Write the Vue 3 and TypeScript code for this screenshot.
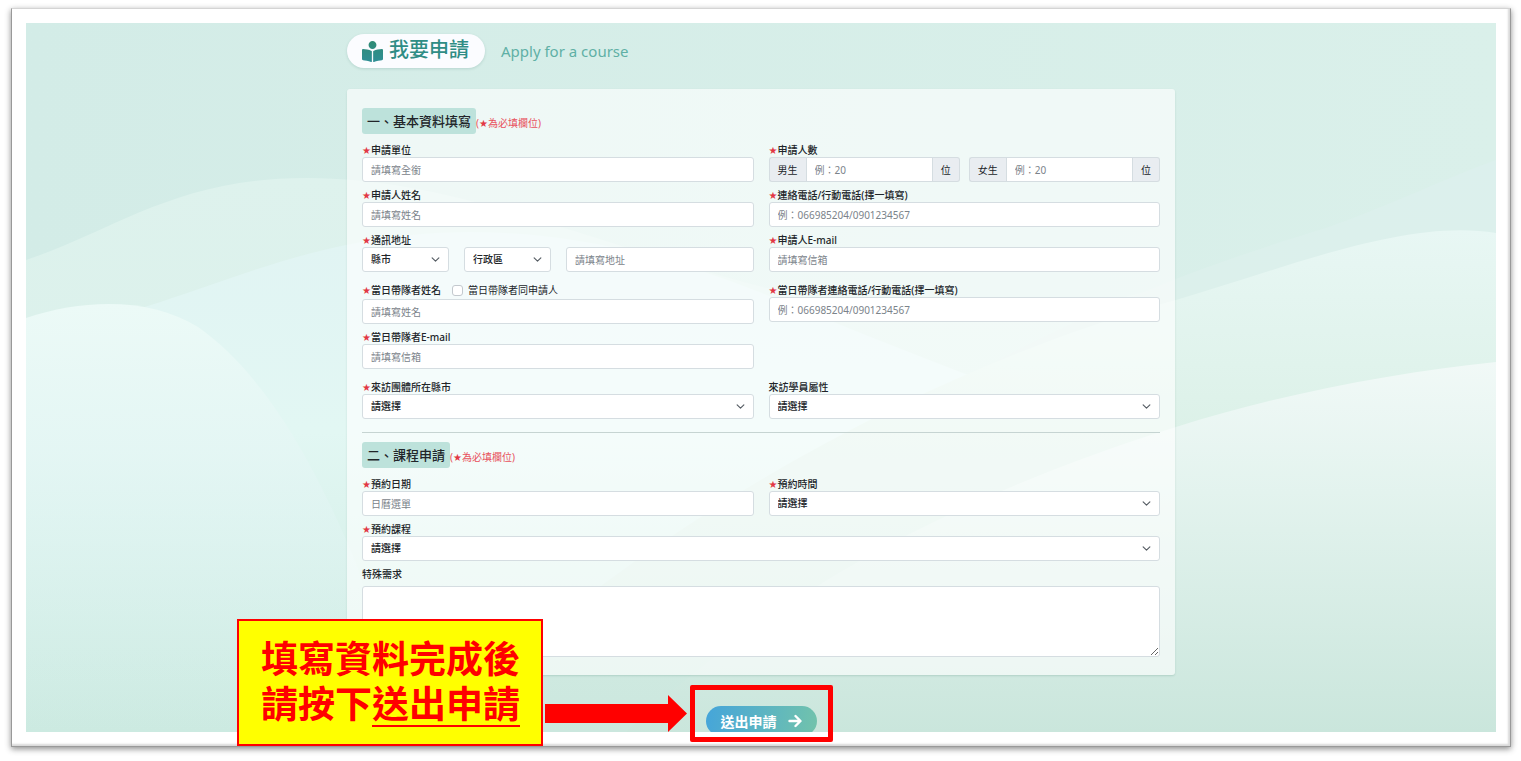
<script setup lang="ts">
import { reactive } from 'vue'

const form = reactive({
  unit: '',
  male: '',
  female: '',
  name: '',
  phone: '',
  city: '縣市',
  district: '行政區',
  address: '',
  email: '',
  leader: '',
  same: false,
  leaderPhone: '',
  leaderEmail: '',
  groupCity: '請選擇',
  attribute: '請選擇',
  date: '',
  time: '請選擇',
  course: '請選擇',
  note: '',
})
</script>

<template>
  <div class="page">
    <div class="frame">
      <main class="scene">
        <svg class="waves" viewBox="0 0 1470 709" preserveAspectRatio="none" aria-hidden="true">
          <defs>
            <linearGradient id="base" x1="0" y1="0" x2="1" y2="0">
              <stop offset="0" stop-color="#d3ece7" />
              <stop offset="1" stop-color="#daf0ea" />
            </linearGradient>
            <linearGradient id="hillA" x1="0" y1="0" x2="0" y2="1">
              <stop offset="0" stop-color="#def2ed" />
              <stop offset="1" stop-color="#d6efe8" />
            </linearGradient>
            <linearGradient id="hillE" x1="0" y1="0" x2="0" y2="1">
              <stop offset="0" stop-color="#e1f4f3" />
              <stop offset="0.4" stop-color="#e2f7f3" />
              <stop offset="1" stop-color="#cceae1" />
            </linearGradient>
            <linearGradient id="hillF" x1="0" y1="0" x2="0" y2="1">
              <stop offset="0" stop-color="#ecfaf7" />
              <stop offset="0.35" stop-color="#e4f6f4" stop-opacity="0.9" />
              <stop offset="1" stop-color="#d4eeea" stop-opacity="0" />
            </linearGradient>
            <linearGradient id="hillC" x1="0" y1="0" x2="0" y2="1">
              <stop offset="0" stop-color="#dcf0ed" />
              <stop offset="0.4" stop-color="#dcf0ea" />
              <stop offset="1" stop-color="#cceae1" />
            </linearGradient>
            <linearGradient id="hillB" x1="0" y1="0" x2="0" y2="1">
              <stop offset="0" stop-color="#e8f7f4" />
              <stop offset="0.4" stop-color="#dcf1e8" />
              <stop offset="1" stop-color="#cbe7de" />
            </linearGradient>
            <linearGradient id="hillD" x1="0" y1="0" x2="0" y2="1">
              <stop offset="0" stop-color="#f1f9f7" />
              <stop offset="0.35" stop-color="#e3f3ee" />
              <stop offset="1" stop-color="#cae6dc" />
            </linearGradient>
          </defs>
          <rect width="1470" height="709" fill="url(#base)" />
          <path d="M0 237C90 207 150 155 281 155C430 155 560 220 760 270C900 302 1020 300 1150 260L1300 400V709H0Z" fill="url(#hillA)" />
          <path d="M500 709C800 380 1100 265 1300 205C1370 180 1420 155 1470 137V709Z" fill="url(#hillC)" />
          <path d="M0 309C120 297 200 247 320 222C470 190 620 220 760 280C960 360 1200 460 1470 500V709H0Z" fill="url(#hillE)" />
          <path d="M400 709C620 500 900 345 1150 277C1260 245 1380 195 1470 210V709Z" fill="url(#hillB)" />
          <path d="M0 295C60 275 125 275 172 304C230 345 280 420 330 540C350 600 370 660 380 709H0Z" fill="url(#hillF)" />
          <path d="M600 709C760 560 940 470 1150 404C1250 372 1370 349 1470 339V709Z" fill="url(#hillD)" />
        </svg>

        <div class="content">
          <header class="head">
            <h1 class="pill">
              <svg class="reader" viewBox="0 0 512 512" aria-hidden="true">
                <defs>
                  <linearGradient id="ink" x1="0" y1="0" x2="0" y2="1">
                    <stop offset="0" stop-color="#2f8b74" />
                    <stop offset="1" stop-color="#2f8f96" />
                  </linearGradient>
                </defs>
                <path fill="url(#ink)" d="M352 96c0-53-43-96-96-96s-96 43-96 96 43 96 96 96 96-43 96-96zM233.600 241.100c-59.300-36.700-155.100-46.300-203.800-49C13.600 191.200 0 203.700 0 219.100v222.800c0 14.300 11.600 26.300 26.500 27.100 43.700 2.300 132.500 10.700 193.600 41.400 9.400 4.700 19.900-1.900 19.900-12V254.600c0-5.500-2.400-10.600-6.400-13.500zm248.600-49c-48.700 2.700-144.500 12.300-203.800 49-4.100 2.900-6.400 8-6.400 13.500v243.800c0 10.100 10.500 16.700 19.900 12 61.100-30.700 149.900-39.100 193.600-41.400 14.900-.8 26.500-12.800 26.500-27.100V219.100c0-15.400-13.600-27.900-29.800-27z" />
              </svg>
              <span>我要申請</span>
            </h1>
            <p class="subtitle">Apply for a course</p>
          </header>

          <form class="card" @submit.prevent>
            <div class="section">
              <h2>一、基本資料填寫</h2>
              <span class="hint">(<i>★</i>為必填欄位)</span>
            </div>

            <div class="row">
              <div class="field">
                <label for="unit"><i>★</i>申請單位</label>
                <input id="unit" v-model="form.unit" class="control" type="text" placeholder="請填寫全銜" />
              </div>
              <div class="field">
                <label for="male"><i>★</i>申請人數</label>
                <div class="counts">
                  <div class="group">
                    <label class="addon" for="male">男生</label>
                    <input id="male" v-model="form.male" class="control" type="text" placeholder="例：20" />
                    <span class="addon">位</span>
                  </div>
                  <div class="group">
                    <label class="addon" for="female">女生</label>
                    <input id="female" v-model="form.female" class="control" type="text" placeholder="例：20" />
                    <span class="addon">位</span>
                  </div>
                </div>
              </div>
            </div>

            <div class="row">
              <div class="field">
                <label for="name"><i>★</i>申請人姓名</label>
                <input id="name" v-model="form.name" class="control" type="text" placeholder="請填寫姓名" />
              </div>
              <div class="field">
                <label for="phone"><i>★</i>連絡電話/行動電話(擇一填寫)</label>
                <input id="phone" v-model="form.phone" class="control" type="text" placeholder="例：066985204/0901234567" />
              </div>
            </div>

            <div class="row">
              <div class="field">
                <label for="address"><i>★</i>通訊地址</label>
                <div class="address">
                  <select v-model="form.city" class="control" aria-label="縣市">
                    <option>縣市</option>
                  </select>
                  <select v-model="form.district" class="control" aria-label="行政區">
                    <option>行政區</option>
                  </select>
                  <input id="address" v-model="form.address" class="control" type="text" placeholder="請填寫地址" />
                </div>
              </div>
              <div class="field">
                <label for="email"><i>★</i>申請人E-mail</label>
                <input id="email" v-model="form.email" class="control" type="text" placeholder="請填寫信箱" />
              </div>
            </div>

            <div class="row spaced">
              <div class="field">
                <div class="leader">
                  <label for="leader"><i>★</i>當日帶隊者姓名</label>
                  <input id="same" v-model="form.same" class="tick" type="checkbox" />
                  <label class="plain" for="same">當日帶隊者同申請人</label>
                </div>
                <input id="leader" v-model="form.leader" class="control" type="text" placeholder="請填寫姓名" />
              </div>
              <div class="field">
                <label for="leader-phone"><i>★</i>當日帶隊者連絡電話/行動電話(擇一填寫)</label>
                <input id="leader-phone" v-model="form.leaderPhone" class="control" type="text" placeholder="例：066985204/0901234567" />
              </div>
            </div>

            <div class="row">
              <div class="field">
                <label for="leader-email"><i>★</i>當日帶隊者E-mail</label>
                <input id="leader-email" v-model="form.leaderEmail" class="control" type="text" placeholder="請填寫信箱" />
              </div>
            </div>

            <div class="row spaced">
              <div class="field">
                <label for="group-city"><i>★</i>來訪團體所在縣市</label>
                <select id="group-city" v-model="form.groupCity" class="control">
                  <option>請選擇</option>
                </select>
              </div>
              <div class="field">
                <label for="attribute">來訪學員屬性</label>
                <select id="attribute" v-model="form.attribute" class="control">
                  <option>請選擇</option>
                </select>
              </div>
            </div>

            <hr />

            <div class="section">
              <h2>二、課程申請</h2>
              <span class="hint">(<i>★</i>為必填欄位)</span>
            </div>

            <div class="row">
              <div class="field">
                <label for="date"><i>★</i>預約日期</label>
                <input id="date" v-model="form.date" class="control" type="text" placeholder="日曆選單" />
              </div>
              <div class="field">
                <label for="time"><i>★</i>預約時間</label>
                <select id="time" v-model="form.time" class="control">
                  <option>請選擇</option>
                </select>
              </div>
            </div>

            <div class="field wide">
              <label for="course"><i>★</i>預約課程</label>
              <select id="course" v-model="form.course" class="control">
                <option>請選擇</option>
              </select>
            </div>

            <div class="field wide">
              <label for="note">特殊需求</label>
              <textarea id="note" v-model="form.note" class="control"></textarea>
            </div>
          </form>

          <div class="actions">
            <button class="submit" type="button">
              <span>送出申請</span>
              <svg viewBox="0 0 14 14" aria-hidden="true">
                <path d="M1.500 7H12M7.500 2L12.500 7L7.500 12" fill="none" stroke="#fff" stroke-width="2.400" stroke-linecap="round" stroke-linejoin="round" />
              </svg>
            </button>
          </div>
        </div>
      </main>

      <aside class="callout">
        <div class="note">
          <p>填寫資料完成後</p>
          <p>請按下<u>送出申請</u></p>
        </div>
        <svg class="arrow" viewBox="0 0 142 37" aria-hidden="true">
          <path d="M0 9H123V0L142 18.500L123 37V28H0Z" fill="#f00" />
        </svg>
        <div class="ring"></div>
      </aside>
    </div>
  </div>
</template>

<style>
body {
  margin: 0;
  background: #fff;
}
</style>

<style scoped>
.page {
  box-sizing: border-box;
  padding: 8px 10px 14px 11px;
  font-family: "Noto Sans", "Noto Sans CJK TC", sans-serif;
  font-size: 10px;
  color: #212529;
}

.page *,
.page *::before {
  box-sizing: border-box;
}

.frame {
  position: relative;
  padding: 14px;
  border: 1px solid #999;
  border-top-color: #d4d4d4;
  background: #fff;
  box-shadow: 0 2px 6px rgba(0, 0, 0, 0.45), inset -2px -2px 2px rgba(0, 0, 0, 0.15);
}

.scene {
  position: relative;
  overflow: hidden;
}

.waves {
  position: absolute;
  inset: 0;
  width: 100%;
  height: 100%;
}

.content {
  position: relative;
  max-width: 828px;
  margin: 0 auto;
  padding-top: 11px;
}

.head {
  display: flex;
  align-items: center;
  gap: 16px;
  margin-bottom: 21px;
}

.pill {
  display: flex;
  align-items: center;
  gap: 6px;
  height: 34px;
  margin: 0;
  padding: 0 16px 0 15px;
  border-radius: 17px;
  background: #fbfcff;
  box-shadow: 0 1px 3px rgba(0, 80, 70, 0.15);
  font-size: 20px;
  font-weight: 500;
  line-height: 32px;
  color: #2f8d85;
}

.pill span {
  height: 34px;
}

.reader {
  width: 21px;
  height: 21px;
}

.subtitle {
  margin: 0;
  font-size: 15px;
  line-height: 20px;
  color: #5fb0a5;
}

.card {
  padding: 19px 15px 18px;
  border-radius: 3px;
  background: rgba(255, 255, 255, 0.62);
  box-shadow: 0 1px 2px rgba(0, 80, 60, 0.15);
}

.section {
  display: flex;
  align-items: center;
  margin-bottom: 8px;
}

.section h2 {
  margin: 0;
  padding: 0 5px;
  border-radius: 3px;
  background: #bde2db;
  font-size: 13px;
  font-weight: 500;
  line-height: 26px;
}

i {
  font-family: "DejaVu Sans", sans-serif;
  font-style: normal;
  font-weight: 400;
  color: #e23744;
}

.hint {
  padding-top: 4px;
  line-height: 15px;
  color: #e8505c;
}

.row {
  display: grid;
  grid-template-columns: 1fr 1fr;
  gap: 15px;
  margin-bottom: 5px;
}

.row.spaced {
  margin-top: 10px;
}

.field {
  min-width: 0;
}

.field.wide {
  margin-bottom: 5px;
}

.field.wide:last-child {
  margin-bottom: 0;
}

label {
  display: block;
  height: 15px;
  font-weight: 500;
  line-height: 17px;
  white-space: nowrap;
}

.control {
  display: block;
  width: 100%;
  min-width: 0;
  height: 25px;
  margin: 0;
  padding: 0 8px;
  border: 1px solid #d5dde1;
  border-radius: 3px;
  background-color: #fff;
  font-family: inherit;
  font-size: 10px;
  line-height: 15px;
  color: #212529;
  outline: none;
}

.control::placeholder {
  color: #7b838a;
  opacity: 1;
}

select.control {
  appearance: none;
  font-weight: 500;
  background-image: url("data:image/svg+xml,%3Csvg xmlns='http://www.w3.org/2000/svg' viewBox='0 0 16 16'%3E%3Cpath fill='none' stroke='%23555c63' stroke-linecap='round' stroke-linejoin='round' stroke-width='2' d='M2 5l6 6 6-6'/%3E%3C/svg%3E");
  background-repeat: no-repeat;
  background-position: right 8px center;
  background-size: 9px 9px;
}

textarea.control {
  height: 71px;
  margin-top: 5px;
  padding: 5px 8px;
  resize: vertical;
}

.counts {
  display: grid;
  grid-template-columns: 1fr 1fr;
  gap: 9px;
}

.group {
  display: flex;
}

.group .control {
  flex: 1;
  border-radius: 0;
}

.addon {
  height: 25px;
  padding: 0 8px;
  border: 1px solid #d5dde1;
  background: #e9edf1;
  font-weight: 400;
  line-height: 24px;
}

.addon:first-child {
  border-right: 0;
  border-radius: 3px 0 0 3px;
}

.addon:last-child {
  border-left: 0;
  border-radius: 0 3px 3px 0;
}

.address {
  display: grid;
  grid-template-columns: 87px 87px 1fr;
  gap: 15px;
}

.leader {
  display: flex;
  align-items: center;
  height: 17px;
}

.leader label {
  line-height: 15px;
}

.tick {
  appearance: none;
  width: 11px;
  height: 11px;
  margin: 0 5px 0 11px;
  border: 1px solid #c3c9ce;
  border-radius: 3px;
  background: #fff;
}

.tick:checked {
  background: #2f8d85;
}

.leader .plain {
  font-weight: 400;
}

hr {
  height: 1px;
  margin: 13px 0 9px;
  border: 0;
  background: #c6d4d2;
}

.actions {
  display: flex;
  justify-content: center;
  margin-top: 31px;
  margin-bottom: -4px;
}

.submit {
  display: flex;
  align-items: center;
  gap: 11px;
  height: 30px;
  padding: 0 15px;
  border: 0;
  border-radius: 15px;
  background: linear-gradient(100deg, #45a5da, #72c3ab);
  font-family: inherit;
  font-size: 14px;
  font-weight: 700;
  color: #fff;
}

.submit svg {
  width: 14px;
  height: 14px;
}

.callout {
  position: absolute;
  right: calc(50% - 72px);
  bottom: 0;
  display: flex;
  align-items: flex-end;
  pointer-events: none;
}

.note {
  padding: 17px 21px 16px 22px;
  border: 2px solid #f00;
  background: #ff0;
  font-family: "Liberation Sans", "Noto Sans CJK TC", sans-serif;
  font-size: 37px;
  font-weight: 700;
  line-height: 45px;
  color: #f00;
  white-space: nowrap;
}

.note p {
  height: 45px;
  margin: 0;
}

.note u {
  text-decoration-thickness: 2px;
  text-underline-offset: 7px;
}

.arrow {
  width: 142px;
  height: 37px;
  margin: 0 3px 14px 2px;
}

.ring {
  width: 143px;
  height: 57px;
  margin-bottom: 4px;
  border: 5px solid #f00;
  border-radius: 2px;
}
</style>
